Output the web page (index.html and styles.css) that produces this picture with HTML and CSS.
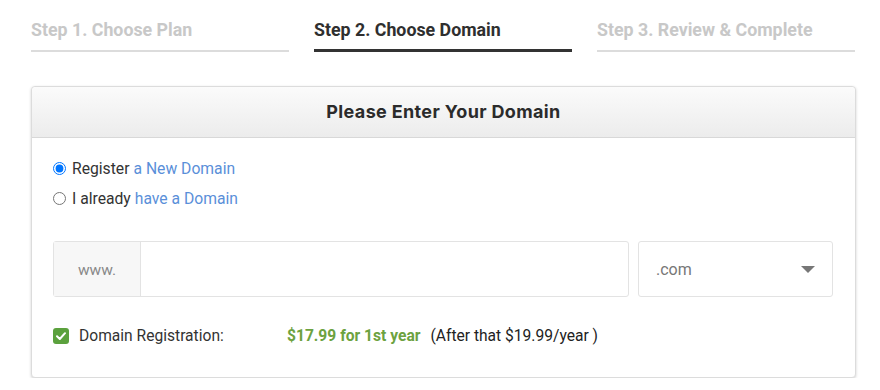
FILE: index.html
```html
<!DOCTYPE html>
<html>
<head>
<meta charset="utf-8">
<link rel="stylesheet" href="styles.css">
</head>
<body>
<div class="page">
  <div class="steps">
    <div class="step">Step 1. Choose Plan</div>
    <div class="step active">Step 2. Choose Domain</div>
    <div class="step">Step 3. Review &amp; Complete</div>
  </div>
  <div class="card">
    <div class="card-head">Please Enter Your Domain</div>
    <div class="card-body">
      <label class="radio-row"><input type="radio" name="d" checked> Register <span class="link">a New Domain</span></label>
      <label class="radio-row"><input type="radio" name="d"> I already <span class="link">have a Domain</span></label>
      <div class="domain-row">
        <div class="input-group">
          <div class="addon">www.</div>
          <div class="field"></div>
        </div>
        <div class="select">
          <span>.com</span>
          <svg class="caret" width="14" height="7" viewBox="0 0 14 7"><path d="M0 0H14L7 7Z" fill="#777"/></svg>
        </div>
      </div>
      <div class="reg-row">
        <span class="check"><svg width="10" height="8" viewBox="0 0 10 8"><path d="M1 4.2L3.8 7L9 1.2" fill="none" stroke="#fff" stroke-width="2" stroke-linecap="round" stroke-linejoin="round"/></svg></span>
        <span class="reg-label">Domain Registration:</span>
        <span class="price">$17.99 for 1st year</span>
        <span class="after">(After that $19.99/year )</span>
      </div>
    </div>
  </div>
</div>
</body>
</html>
```

FILE: styles.css
```css
* { box-sizing: border-box; }
body { margin: 0; background: #fff; font-family: Roboto, "Liberation Sans", sans-serif; color: #333; }
.page { width: 880px; padding: 0 24px 0 31px; }
.steps { display: flex; gap: 25px; }
.step {
  width: 258px;
  padding-top: 20px;
  padding-bottom: 10px;
  line-height: 20px;
  font-size: 17.8px;
  font-weight: 700;
  color: #c8c8c8;
  border-bottom: 2px solid #dcdcdc;
  white-space: nowrap;
}
.step.active { color: #2f2f2f; border-bottom: 3px solid #333; padding-bottom: 9px; }
.card {
  margin-top: 34px;
  width: 825px;
  border: 1px solid #dcdcdc;
  border-radius: 4px;
  box-shadow: 0 1px 3px rgba(0,0,0,0.18);
  background: #fff;
}
.card-head {
  height: 51px;
  line-height: 50px;
  text-align: center;
  font-family: Inter, "Noto Sans", sans-serif;
  font-weight: 700;
  font-size: 18px;
  letter-spacing: 0.35px;
  color: #2b2b2b;
  background: linear-gradient(#fbfbfb, #ececec);
  border-bottom: 1px solid #d8d8d8;
  border-radius: 4px 4px 0 0;
}
.card-body { padding: 15px 22px 26px 21px; }
.radio-row { display: flex; align-items: center; height: 30px; font-size: 15.7px; color: #333; }
.radio-row input { margin: 0 6px 0 0; width: 13px; height: 13px; accent-color: #0075ff; }
.radio-row .link { color: #5a8fd9; margin-left: 4px; }
.domain-row { display: flex; gap: 9px; margin-top: 28px; height: 56px; }
.input-group { flex: 1; display: flex; border: 1px solid #e3e3e3; border-radius: 3px; }
.addon {
  width: 87px;
  display: flex; align-items: center; justify-content: center;
  background: #f7f7f7;
  border-right: 1px solid #e3e3e3;
  color: #888;
  font-size: 15.5px;
  padding-top: 2px;
}
.field { flex: 1; }
.select {
  width: 195px;
  display: flex; align-items: center; justify-content: space-between;
  border: 1px solid #e3e3e3;
  border-radius: 3px;
  padding: 0 17px 0 17px;
  color: #777;
  font-size: 16px;
}
.reg-row { display: flex; align-items: center; height: 30px; margin-top: 24px; font-size: 15.6px; }
.check {
  width: 16px; height: 16px;
  background: #5ba13d;
  border-radius: 3px;
  display: flex; align-items: center; justify-content: center;
  margin-right: 10px;
}
.reg-label { width: 208px; color: #333; }
.price { color: #6da23f; font-weight: 700; margin-right: 10px; }
.after { color: #222; }
```
